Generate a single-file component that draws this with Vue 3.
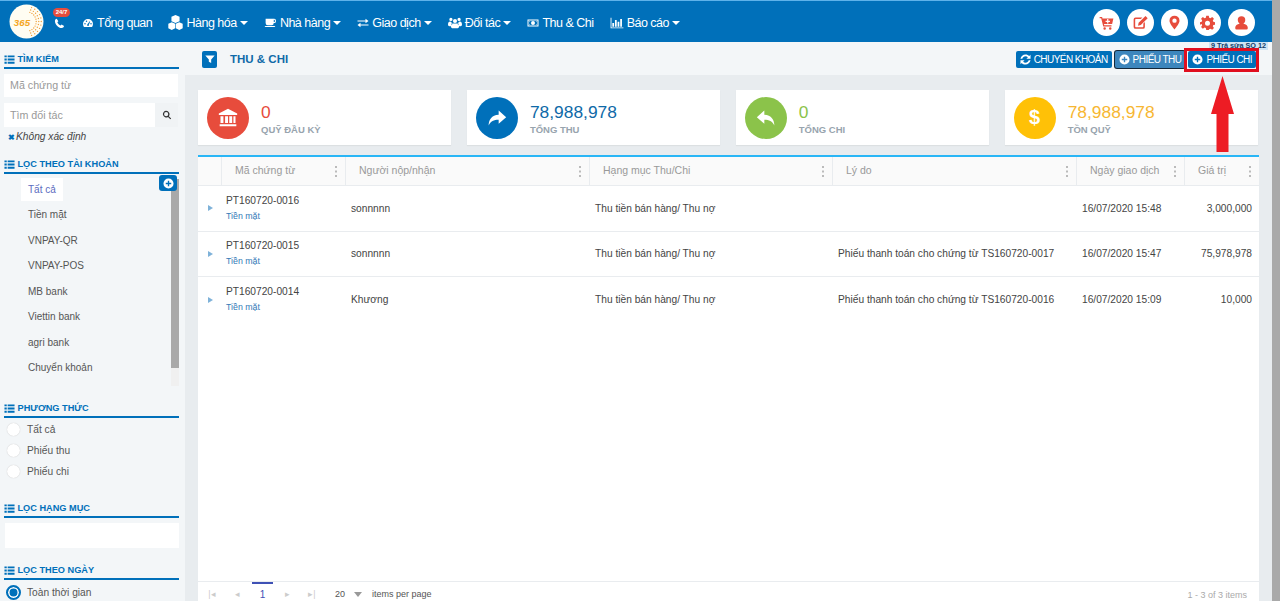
<script setup>
const logoDots = []
for (let r = 0; r < 3; r++) {
  for (let a = -70; a <= 70; a += 14) {
    const rad = (a * Math.PI) / 180
    logoDots.push({ x: 18 + (10 + r * 2.6) * Math.cos(rad), y: 18 + (10 + r * 2.6) * Math.sin(rad) })
  }
}

const icons = {
  dashboard: 'M12 4a10 10 0 0 0-10 10c0 2.2.7 4.2 1.9 5.8h16.2A10 10 0 0 0 22 14 10 10 0 0 0 12 4zm-6 11a1.5 1.5 0 1 1 0-3 1.5 1.5 0 0 1 0 3zm3-5a1.5 1.5 0 1 1 0-3 1.5 1.5 0 0 1 0 3zm4.5 7.5a2 2 0 0 1-3-2.500l5-6.500.8.400-2.800 7zM18 15a1.500 1.500 0 1 1 0-3 1.500 1.500 0 0 1 0 3z',
  cubes: 'M12 0l6.500 2.800v7L12 12.600 5.500 9.800v-7zM6 11.400l5.500 2.400v7.400L6 24 .5 21.200v-7.400zM18 11.400l5.500 2.400v7.400L18 24l-5.500-2.800v-7.400z',
  coffee: 'M3 5h16a3 3 0 0 1 3 3v2a3 3 0 0 1-3 3h-1a4 4 0 0 1-4 4H7a4 4 0 0 1-4-4zm15 2v4h1a1 1 0 0 0 1-1V8a1 1 0 0 0-1-1zM1 18.500h20l-1.500 2h-17z',
  exchange: 'M1 7h16V3.500L23 8l-6 4.500V9H1zM23 15H7v-3.500L1 16l6 4.500V17h16z',
  users: 'M12 5a3.500 3.500 0 1 1 0 7 3.500 3.500 0 0 1 0-7zM5 3a2.800 2.800 0 1 1 0 5.600A2.800 2.800 0 0 1 5 3zm14 0a2.800 2.800 0 1 1 0 5.600A2.800 2.800 0 0 1 19 3zM0 15c0-4 1.500-5.500 3.500-5.500 1 0 1.800.5 2.500 1 0 1.500.5 2.500 1.500 3.500-1.500.8-2.500 2-2.800 3.500C2 17.500 0 17 0 15zm24 0c0 2-2 2.500-4.700 2.500-.3-1.500-1.300-2.700-2.800-3.500 1-1 1.500-2 1.500-3.500.7-.5 1.500-1 2.500-1 2 0 3.500 1.500 3.500 5.500zM8 13h8c2 .5 3 2.500 3 5 0 2-1.500 3-3.500 3h-7C6.500 21 5 20 5 18c0-2.500 1-4.500 3-5z',
  money: 'M1 5h22v14H1zm2 2v10h18V7zm9 1a4 4 0 1 1 0 8 4 4 0 0 1 0-8zM4.500 8.500h2l-2 2zm15 0v2l-2-2zm-15 7l2 0-2-2zm15 0h-2l2-2z',
  chart: 'M1 3h1.500v16.500H23V21H1zM4 12h3v6.500H4zm4.500-5h3v11.500h-3zM13 10h3v8.500h-3zm4.500-5h3v13.500h-3z',
  cart: 'M1 3h4l.6 2.500H23l-2 9H8l.4 2H20v2H6.800L3.500 5H1zM13 6.500v2.500h-2.500v2H13v2.500h2V11h2.500V9H15V6.500zM9 19.500a2 2 0 1 1 0 4 2 2 0 0 1 0-4zm9 0a2 2 0 1 1 0 4 2 2 0 0 1 0-4z',
  edit: 'M4 4h11l-2.500 2.500H4.500A1 1 0 0 0 3.500 7.500v11a1 1 0 0 0 1 1h11a1 1 0 0 0 1-1v-5L19 11v8a3 3 0 0 1-3 3H4a3 3 0 0 1-3-3V7a3 3 0 0 1 3-3zm16-2.500L23.500 5 12.500 16 8 17l1-4.500z',
  pin: 'M12 1a8 8 0 0 1 8 8c0 4-5 10-8 14-3-4-8-10-8-14a8 8 0 0 1 8-8zm0 4.500a3.500 3.500 0 1 0 0 7 3.500 3.500 0 0 0 0-7z',
  gear: 'M10 1h4l.7 3.200 2 .8L19.500 3.200l2.800 2.800L20.500 8.800l.8 2L24 11.500v4l-2.700.6-.8 2 1.800 2.700-2.800 2.800-2.800-1.800-2 .8L14 24h-4l-.7-3.200-2-.8-2.800 1.800-2.800-2.800 1.800-2.700-.8-2L0 15.500v-4l2.700-.7.800-2L1.700 6l2.800-2.800L7.300 5l2-.8zM12 9a4 4 0 1 0 0 8 4 4 0 0 0 0-8z',
  user: 'M12 2a6 6 0 0 1 6 6c0 2.500-1.300 4.700-3 5.800 4 .7 7 2.700 7 6.200v1a2 2 0 0 1-2 2H4a2 2 0 0 1-2-2v-1c0-3.500 3-5.500 7-6.200A7 7 0 0 1 6 8a6 6 0 0 1 6-6z',
  bank: 'M12 1l11 5.500V8.500H1V6.500zM3 10h3.500v8H3zm5.500 0H12v8H8.500zm5 0H17v8h-3.500zm5 0H21v8h-2.500zM2 19.500h20V22H2z',
  share: 'M14 3l9 8-9 8v-5C8 14 4.500 15.500 2 21c0-7 3.500-12.500 12-13z',
  reply: 'M10 3l-9 8 9 8v-5c6 0 9.500 1.500 12 7 0-7-3.500-12.500-12-13z',
  filter: 'M4 6h16l-6 7v6l-4-2.500V13z',
  search: 'M10 2a8 8 0 0 1 6.400 12.800l5.600 5.600-2 2-5.600-5.600A8 8 0 1 1 10 2zm0 3a5 5 0 1 0 0 10 5 5 0 0 0 0-10z',
  list: 'M1 3h5v4H1zm7 0h15v4H8zM1 10h5v4H1zm7 0h15v4H8zM1 17h5v4H1zm7 0h15v4H8z',
  plus: 'M12 1a11 11 0 1 1 0 22 11 11 0 0 1 0-22zm-1.500 5v4.500H6v3h4.500V18h3v-4.500H18v-3h-4.500V6z',
  sync: 'M12 1c3.300 0 6.200 1.300 8.200 3.400L23 1.500V10.500h-9l3.200-3.200C15.800 5.800 14 5 12 5 8.700 5 6 7 5 10.500H1C2.200 5 6.600 1 12 1zM1 13.500h9l-3.200 3.200C8.200 18.200 10 19 12 19c3.300 0 6-2 7-5.500h4C21.800 19 17.400 23 12 23c-3.300 0-6.200-1.300-8.200-3.400L1 22.500z',
  phone: 'M6 1.500l3.500 5.500-2.200 2.200c1 2.800 4 6 7 7.200l2.200-2.200 5.500 3.500c-.5 2.500-2.800 4.300-5 4.300C9.500 22 2 13.500 2 6.500c0-2.200 1.500-4.500 4-5z'
}

const menu = [
  { label: 'Tổng quan', icon: 'dashboard', w: 12 },
  { label: 'Hàng hóa', icon: 'cubes', w: 15, caret: true },
  { label: 'Nhà hàng', icon: 'coffee', w: 13, caret: true },
  { label: 'Giao dịch', icon: 'exchange', w: 12, caret: true },
  { label: 'Đối tác', icon: 'users', w: 14, caret: true },
  { label: 'Thu & Chi', icon: 'money', w: 12 },
  { label: 'Báo cáo', icon: 'chart', w: 14, caret: true }
]
const tools = ['cart', 'edit', 'pin', 'gear', 'user']
const accounts = ['Tất cả', 'Tiền mặt', 'VNPAY-QR', 'VNPAY-POS', 'MB bank', 'Viettin bank', 'agri bank', 'Chuyển khoản']
const stats = [
  { value: '0', label: 'QUỸ ĐẦU KỲ', icon: 'bank', cls: 'red' },
  { value: '78,988,978', label: 'TỔNG THU', icon: 'share', cls: 'blue' },
  { value: '0', label: 'TỔNG CHI', icon: 'reply', cls: 'green' },
  { value: '78,988,978', label: 'TỒN QUỸ', icon: null, cls: 'yellow' }
]
const columns = ['Mã chứng từ', 'Người nộp/nhận', 'Hạng mục Thu/Chi', 'Lý do', 'Ngày giao dịch', 'Giá trị']
const rows = [
  { code: 'PT160720-0016', who: 'sonnnnn', cat: 'Thu tiền bán hàng/ Thu nợ', why: '', date: '16/07/2020 15:48', val: '3,000,000' },
  { code: 'PT160720-0015', who: 'sonnnnn', cat: 'Thu tiền bán hàng/ Thu nợ', why: 'Phiếu thanh toán cho chứng từ TS160720-0017', date: '16/07/2020 15:47', val: '75,978,978' },
  { code: 'PT160720-0014', who: 'Khương', cat: 'Thu tiền bán hàng/ Thu nợ', why: 'Phiếu thanh toán cho chứng từ TS160720-0016', date: '16/07/2020 15:09', val: '10,000' }
]
</script>

<template>
  <div class="page">
    <div class="shell">
      <header class="topbar">
        <div class="logo">
          <svg viewBox="0 0 36 36" width="35" height="35">
            <circle cx="18" cy="18" r="17.500" fill="#fffdf2" />
            <circle v-for="(d, i) in logoDots" :key="i" :cx="d.x" :cy="d.y" r="0.700" fill="#f0a03c" />
            <text x="5" y="23" class="logo-text">365</text>
          </svg>
        </div>
        <div class="phone">
          <span class="badge">24/7</span>
          <svg viewBox="0 0 24 24" width="11" height="11"><path :d="icons.phone" fill="#fff" /></svg>
        </div>
        <nav class="menu">
          <a v-for="m in menu" :key="m.label" class="menu-item">
            <svg viewBox="0 0 24 24" :width="m.w" :height="m.w"><path :d="icons[m.icon]" fill="#fff" fill-rule="evenodd" /></svg>
            <span>{{ m.label }}</span>
            <i v-if="m.caret" class="caret"></i>
          </a>
        </nav>
        <div class="tools">
          <span v-for="t in tools" :key="t" class="tool">
            <svg viewBox="0 0 24 24" width="15" height="15"><path :d="icons[t]" fill="#e74c3c" fill-rule="evenodd" /></svg>
          </span>
        </div>
      </header>

      <div class="body">
        <aside class="side">
          <h4 class="sec first"><svg viewBox="0 0 24 24" width="11" height="11"><path :d="icons.list" /></svg>TÌM KIẾM</h4>
          <div class="field">Mã chứng từ</div>
          <div class="search-row">
            <div class="field grow">Tìm đối tác</div>
            <span class="search-btn"><svg viewBox="0 0 24 24" width="10" height="10"><path :d="icons.search" fill="#333" fill-rule="evenodd" /></svg></span>
          </div>
          <div class="unknown"><b>✖</b>Không xác định</div>

          <h4 class="sec accounts-head"><svg viewBox="0 0 24 24" width="11" height="11"><path :d="icons.list" /></svg>LỌC THEO TÀI KHOẢN</h4>
          <div class="accounts">
            <ul>
              <li v-for="(a, i) in accounts" :key="a" :class="{ active: i === 0 }"><span>{{ a }}</span></li>
            </ul>
            <div class="track"><div class="thumb"></div></div>
            <span class="add"><svg viewBox="0 0 24 24" width="11" height="11"><path :d="icons.plus" fill="#fff" fill-rule="evenodd" /></svg></span>
          </div>

          <h4 class="sec method-head"><svg viewBox="0 0 24 24" width="11" height="11"><path :d="icons.list" /></svg>PHƯƠNG THỨC</h4>
          <div class="radios">
            <label v-for="r in ['Tất cả', 'Phiếu thu', 'Phiếu chi']" :key="r"><i class="radio"></i>{{ r }}</label>
          </div>

          <h4 class="sec cat-head"><svg viewBox="0 0 24 24" width="11" height="11"><path :d="icons.list" /></svg>LỌC HẠNG MỤC</h4>
          <div class="blank"></div>

          <h4 class="sec date-head"><svg viewBox="0 0 24 24" width="11" height="11"><path :d="icons.list" /></svg>LỌC THEO NGÀY</h4>
          <div class="radios date">
            <label><i class="radio on"></i>Toàn thời gian</label>
          </div>
        </aside>

        <main class="main">
          <div class="head">
            <span class="filter"><svg viewBox="0 0 24 24" width="14" height="14"><path :d="icons.filter" fill="#fff" /></svg></span>
            <h1>THU &amp; CHI</h1>
            <div class="actions">
              <a class="btn"><svg viewBox="0 0 24 24" width="11" height="11"><path :d="icons.sync" fill="#fff" fill-rule="evenodd" /></svg>CHUYỂN KHOẢN</a>
              <a class="btn focus"><svg viewBox="0 0 24 24" width="11" height="11"><path :d="icons.plus" fill="#fff" fill-rule="evenodd" /></svg>PHIẾU THU</a>
              <a class="btn"><svg viewBox="0 0 24 24" width="11" height="11"><path :d="icons.plus" fill="#fff" fill-rule="evenodd" /></svg>PHIẾU CHI</a>
            </div>
          </div>

          <section class="stats">
            <div v-for="s in stats" :key="s.label" class="card" :class="s.cls">
              <span class="disc">
                <svg v-if="s.icon" viewBox="0 0 24 24" width="20" height="20"><path :d="icons[s.icon]" fill="#fff" /></svg>
                <b v-else>$</b>
              </span>
              <div class="nums">
                <div class="num">{{ s.value }}</div>
                <div class="lbl">{{ s.label }}</div>
              </div>
            </div>
          </section>

          <section class="grid">
            <div class="tr thead">
              <div class="td"></div>
              <div v-for="c in columns" :key="c" class="td">
                <span>{{ c }}</span>
                <i class="dots"></i>
              </div>
            </div>
            <div class="tbody">
              <div v-for="r in rows" :key="r.code" class="tr">
                <div class="td"><i class="arrow"></i></div>
                <div class="td code">{{ r.code }}<small>Tiền mặt</small></div>
                <div class="td">{{ r.who }}</div>
                <div class="td">{{ r.cat }}</div>
                <div class="td">{{ r.why }}</div>
                <div class="td">{{ r.date }}</div>
                <div class="td right">{{ r.val }}</div>
              </div>
            </div>
            <div class="pager">
              <span class="pg">|◂</span>
              <span class="pg">◂</span>
              <span class="cur">1</span>
              <span class="pg">▸</span>
              <span class="pg">▸|</span>
              <span class="size">20</span>
              <i class="size-caret"></i>
              <span class="per">items per page</span>
              <span class="total">1 - 3 of 3 items</span>
            </div>
          </section>
        </main>
      </div>

      <span class="tip">9 Trả sửa SỐ 12</span>
      <span class="mark"></span>
      <svg class="big-arrow" viewBox="0 0 24 76" width="24" height="76">
        <path d="M11.500 0L23 38H17.500V76H5.500V38H0z" fill="#ed1c24" />
      </svg>
    </div>
    <div class="scrollbar"></div>
  </div>
</template>

<style>
html, body { margin: 0; height: 100%; overflow: hidden; }
</style>

<style scoped>
* { box-sizing: border-box; }
.page { display: flex; width: 1280px; height: 601px; overflow: hidden; font-family: "Liberation Sans", Arial, sans-serif; color: #444; }
.shell { position: relative; flex: 1; min-width: 0; display: flex; flex-direction: column; }
.scrollbar { width: 8px; background: #a9a9a9; }

.topbar { height: 42px; flex: none; display: flex; align-items: center; background: #0070ba; border-top: 1px solid #5eb2ea; padding: 1px 17px 0 9px; color: #fff; }
.logo { width: 35px; height: 35px; flex: none; margin-top: -2px; }
.logo svg { display: block; }
.logo-text { font: italic bold 10px "Liberation Sans", sans-serif; fill: #f5a623; }
.phone { position: relative; width: 38px; height: 100%; flex: none; display: flex; align-items: center; justify-content: center; padding: 0 8px 3px 0; }
.phone svg { margin-top: 5px; }
.badge { position: absolute; left: 9px; top: 6px; width: 17px; height: 9px; border-radius: 5px; background: #e74c3c; font-size: 6px; line-height: 9px; text-align: center; font-weight: bold; }
.menu { display: flex; align-items: center; flex: 1; gap: 16.200px; font-size: 12.500px; padding-top: 1px; }
.menu-item { display: flex; align-items: center; gap: 3px; white-space: nowrap; letter-spacing: -0.5px; }
.caret { width: 0; height: 0; border: 4px solid transparent; border-top-color: #fff; border-bottom: 0; }
.tools { display: flex; gap: 6.750px; }
.tool { width: 27px; height: 27px; border-radius: 50%; background: #fff; display: flex; align-items: center; justify-content: center; }

.body { flex: 1; min-height: 0; display: flex; }
.side { width: 185px; flex: none; background: #f3f6f8; padding: 0 6px 0 4px; overflow: hidden; }
.sec { display: flex; align-items: center; gap: 2.500px; margin: 0; height: 15.500px; font-size: 9.200px; font-weight: bold; color: #0070ba; line-height: 12px; border-bottom: 2.500px solid #0070ba; padding-bottom: 1px; white-space: nowrap; }
.sec svg { fill: #0070ba; flex: none; }
.sec.first { margin-top: 11px; }
.field { height: 23px; margin-right: 1px; background: #fff; color: #999; font-size: 10.700px; line-height: 23px; padding: 0 6px; }
.sec + .field { margin-top: 5.500px; }
.search-row { display: flex; margin: 6px 1px 0 0; }
.search-row .field { height: 24px; line-height: 24px; margin-right: 0; }
.grow { flex: 1; }
.search-btn { width: 23px; background: #f0f3f5; display: flex; align-items: center; justify-content: center; }
.unknown { margin: 3px 0 0 4px; font-size: 10.200px; font-style: italic; line-height: 13px; color: #444; }
.unknown b { color: #0070ba; font-style: normal; font-size: 8px; margin-right: 1px; }
.accounts-head { margin-top: 14px; }
.accounts { position: relative; height: 212.500px; }
ul { list-style: none; margin: 0; padding: 4.200px 0 0 17px; }
li { height: 25.500px; font-size: 10px; line-height: 23px; color: #555; }
li span { display: inline-block; padding: 0 7px; height: 23px; }
li.active span { background: #fff; color: #5c6bc0; }
.track { position: absolute; left: 167px; top: 5.500px; bottom: 0; width: 8px; background: #f0f0f0; }
.thumb { height: 189px; background: #a9a9a9; }
.add { position: absolute; left: 155px; top: 1.500px; width: 18px; height: 16px; border-radius: 3px; background: #0070ba; display: flex; align-items: center; justify-content: center; }
.method-head { margin-top: 16px; }
.radios { display: flex; flex-direction: column; padding: 1px 0 0 3px; }
.radios label { display: flex; align-items: center; gap: 7px; height: 21px; font-size: 10.200px; color: #555; }
.radio { width: 13px; height: 13px; border-radius: 50%; background: #fff; box-shadow: 0 0 1px #bbb; flex: none; }
.radio.on { width: 15px; height: 15px; margin: 0 -1px 0 -1px; background: #0070ba; border: 2px solid #0070ba; box-shadow: inset 0 0 0 1.500px #fff; }
.cat-head { margin-top: 20.500px; }
.blank { height: 25px; margin: 5.500px 0 0 1px; background: #fff; }
.date-head { margin-top: 16px; }
.radios.date { padding-top: 2px; }

.main { flex: 1; min-width: 0; display: flex; flex-direction: column; background: #e8ecef; }
.head { height: 33px; flex: none; display: flex; align-items: center; background: #f3f6f8; padding: 1px 16px 0 17px; }
.filter { width: 15px; height: 17px; border-radius: 2px; background: #0070ba; display: flex; align-items: center; justify-content: center; }
.head h1 { margin: 0 0 0 13px; font-size: 11.500px; font-weight: bold; color: #0f6aa8; }
.actions { margin-left: auto; display: flex; gap: 3px; }
.btn { height: 17px; display: flex; align-items: center; gap: 3px; padding: 0 4px; border-radius: 2px; background: #0070ba; color: #fff; font-size: 10px; letter-spacing: -0.55px; white-space: nowrap; }
.btn.focus { background: #3d86bd; box-shadow: 0 0 0 1px #14283a; }

.stats { flex: none; display: grid; grid-template-columns: repeat(4, 1fr); gap: 15.500px; padding: 15px 14px 10px 13px; }
.card { height: 55px; display: flex; align-items: center; gap: 12px; padding: 0 9px; background: #fff; box-shadow: 0 1px 1px rgba(0, 0, 0, .05); }
.disc { width: 42px; height: 42px; border-radius: 50%; display: flex; align-items: center; justify-content: center; flex: none; color: #fff; font-size: 20px; }
.nums { padding-top: 3px; }
.num { font-size: 17.400px; line-height: 20px; }
.lbl { margin-top: 2px; font-size: 9.500px; font-weight: bold; color: #98a4ae; line-height: 12px; }
.red .disc { background: #e74c3c; } .red .num { color: #e74c3c; }
.blue .disc { background: #0070ba; } .blue .num { color: #0f6aa8; }
.green .disc { background: #8bc34a; } .green .num { color: #8bc34a; }
.yellow .disc { background: #ffc107; } .yellow .num { color: #f7b733; }

.grid { flex: 1; min-height: 0; margin: 0 13px 0 13px; display: flex; flex-direction: column; background: #fff; border-top: 2px solid #29b6f6; }
.tr { display: grid; grid-template-columns: 23px 124px 244px 243px 244px 108px 75px; border-bottom: 1px solid #e9ecef; }
.thead { height: 29px; background: #fafafa; color: #999; font-size: 10.500px; }
.thead .td { position: relative; display: flex; align-items: center; padding: 0 0 2px 13px; border-left: 1px solid #e9ecef; }
.thead .td:first-child { border-left: 0; }
.dots { position: absolute; right: 8px; top: 9px; width: 2px; height: 2px; background: #bbb; box-shadow: 0 4.500px 0 #bbb, 0 9px 0 #bbb; }
.tbody { flex: 1; min-height: 0; }
.tbody .tr { height: 45.500px; align-items: center; font-size: 10.200px; color: #444; }
.tbody .tr:last-child { border-bottom: 0; }
.tbody .td { padding-left: 6px; white-space: nowrap; }
.tbody .td:first-child { padding-left: 10px; }
.tbody .td.code { padding-left: 5px; font-size: 10.200px; line-height: 13px; }
.code small { display: block; margin-top: 3px; font-size: 8.800px; color: #337ab7; }
.td.right { text-align: right; padding-right: 7px; }
.arrow { display: block; width: 0; height: 0; border: 3px solid transparent; border-left: 5px solid #7fb2d9; border-right: 0; }
.pager { position: relative; height: 20px; flex: none; display: flex; align-items: center; border-top: 1px solid #e9ecef; font-size: 9px; color: #555; padding-top: 5px; }
.pg { width: 25px; text-align: center; color: #ccc; font-size: 9px; }
.pg:first-child { margin-left: 1.500px; }
.cur { position: relative; width: 21px; margin: 0 1.500px 0 2.500px; text-align: center; color: #3f51b5; font-size: 10px; }
.cur::before { content: ""; position: absolute; left: 0; right: 0; top: -7px; height: 2px; background: #3f51b5; }
.size { margin-left: 10.500px; }
.size-caret { width: 0; height: 0; margin-left: 9px; border: 4px solid transparent; border-top: 5px solid #999; border-bottom: 0; }
.per { margin-left: 10px; }
.total { margin-left: auto; padding: 2px 12px 0 0; color: #aaa; }

.tip { position: absolute; left: 1209px; top: 42px; height: 8px; padding: 0 2px; background: #cfe5f4; color: #12406a; font-size: 7.300px; line-height: 8px; font-weight: bold; white-space: nowrap; }
.mark { position: absolute; left: 1184px; top: 48px; width: 75px; height: 23.500px; border: 3px solid #e00f1f; }
.big-arrow { position: absolute; left: 1210.500px; top: 76px; }
</style>
